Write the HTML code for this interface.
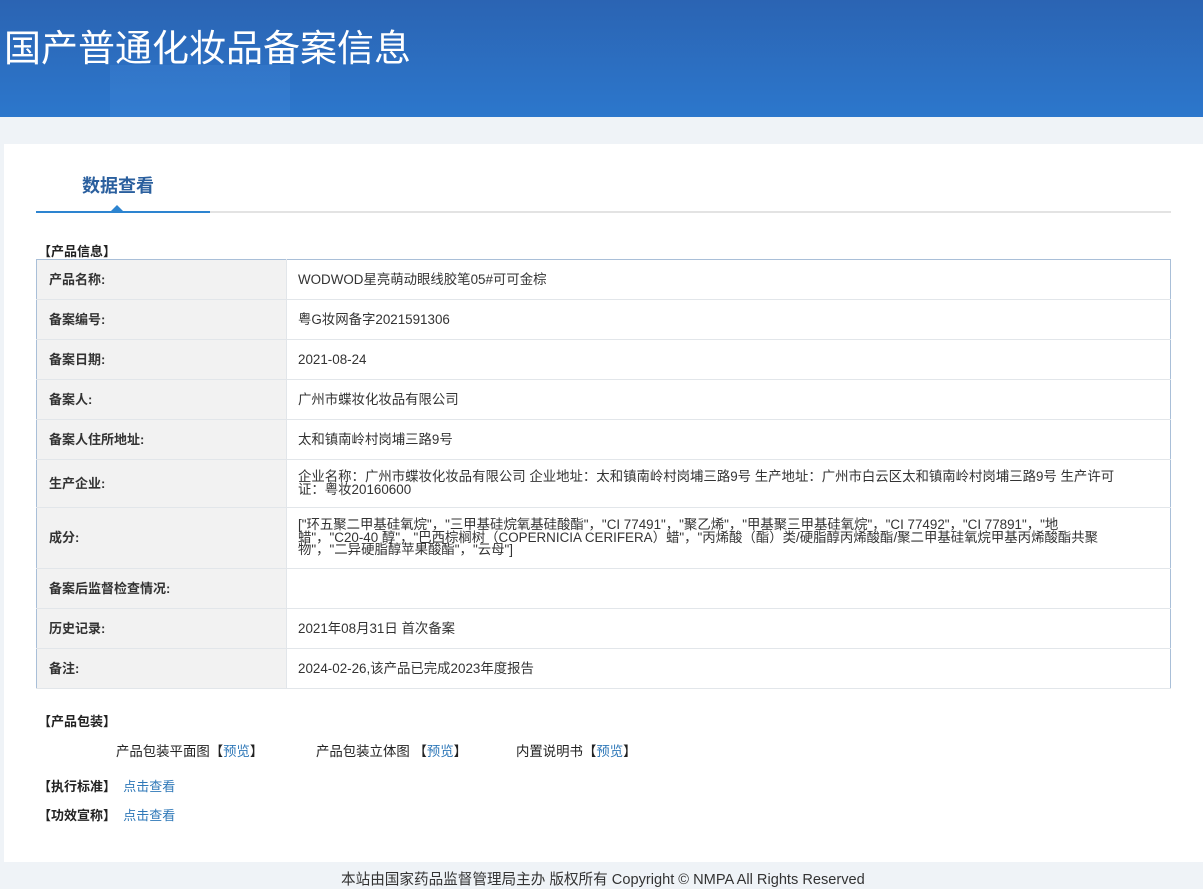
<!DOCTYPE html>
<html><head><meta charset="utf-8"><style>
*{margin:0;padding:0;box-sizing:border-box}
body{width:1203px;height:885px;background:#eff3f7;font-family:"Liberation Sans","Noto Sans CJK SC",sans-serif;color:#333;overflow:hidden;position:relative}
.hd{position:absolute;left:0;top:0;width:1203px;height:117px;background:linear-gradient(180deg,#2b64b3 0%,#2c77cc 100%);overflow:hidden}
.hd .g{position:absolute;left:110px;top:65px;width:180px;height:52px;background:rgba(80,150,230,.2)}
.hd h1{position:absolute;left:4px;top:18px;font-size:37px;font-weight:normal;color:#fff}
.panel{position:absolute;left:4px;top:144px;width:1199px;height:718px;background:#fff}
.tab{position:absolute;left:82px;top:172px;font-size:18px;font-weight:bold;color:#2a5f9e}
.line{position:absolute;left:36px;top:211px;width:1135px;height:2px;background:#e3e3e3}
.line2{position:absolute;left:36px;top:211px;width:174px;height:2px;background:#2d84d0}
.tri{position:absolute;left:111px;top:205px;width:0;height:0;border-left:6px solid transparent;border-right:6px solid transparent;border-bottom:6px solid #2d84d0}
.sec{position:absolute;font-size:13px;font-weight:bold;color:#222}
table{position:absolute;left:36px;top:259px;width:1135px;border-collapse:collapse;border:1px solid #a9bfd8;font-size:13.4px}
td{border-bottom:1px solid #e2e6ea;vertical-align:middle;line-height:16px}
td.l{width:250px;background:#f2f2f2;font-weight:bold;padding-left:12px;color:#333;border-right:1px solid #e2e6ea;font-size:13px}
td.v{padding-left:11px;color:#333}
td.m{line-height:12.5px}
a{color:#2f78b8;text-decoration:none}
.t{position:absolute;font-size:13.4px;color:#222}
.ft{position:absolute;left:341px;top:868px;font-size:14.6px;color:#333}
</style></head><body>
<div class="hd"><div class="g"></div><h1>国产普通化妆品备案信息</h1></div>
<div class="panel"></div>
<div class="tab">数据查看</div>
<div class="line"></div><div class="line2"></div><div class="tri"></div>
<div class="sec" style="left:38px;top:241px">【产品信息】</div>
<table>
<tr style="height:40px"><td class="l">产品名称:</td><td class="v">WODWOD星亮萌动眼线胶笔05#可可金棕</td></tr>
<tr style="height:40px"><td class="l">备案编号:</td><td class="v">粤G妆网备字2021591306</td></tr>
<tr style="height:40px"><td class="l">备案日期:</td><td class="v">2021-08-24</td></tr>
<tr style="height:40px"><td class="l">备案人:</td><td class="v">广州市蝶妆化妆品有限公司</td></tr>
<tr style="height:40px"><td class="l">备案人住所地址:</td><td class="v">太和镇南岭村岗埔三路9号</td></tr>
<tr style="height:48px"><td class="l">生产企业:</td><td class="v m">企业名称：广州市蝶妆化妆品有限公司 企业地址：太和镇南岭村岗埔三路9号 生产地址：广州市白云区太和镇南岭村岗埔三路9号 生产许可<br>证：粤妆20160600</td></tr>
<tr style="height:61px"><td class="l">成分:</td><td class="v m">["环五聚二甲基硅氧烷"，"三甲基硅烷氧基硅酸酯"，"CI 77491"，"聚乙烯"，"甲基聚三甲基硅氧烷"，"CI 77492"，"CI 77891"，"地<br>蜡"，"C20-40 醇"，"巴西棕榈树（COPERNICIA CERIFERA）蜡"，"丙烯酸（酯）类/硬脂醇丙烯酸酯/聚二甲基硅氧烷甲基丙烯酸酯共聚<br>物"，"二异硬脂醇苹果酸酯"，"云母"]</td></tr>
<tr style="height:40px"><td class="l">备案后监督检查情况:</td><td class="v"></td></tr>
<tr style="height:40px"><td class="l">历史记录:</td><td class="v">2021年08月31日 首次备案</td></tr>
<tr style="height:40px"><td class="l">备注:</td><td class="v">2024-02-26,该产品已完成2023年度报告</td></tr>
</table>
<div class="sec" style="left:38px;top:711px">【产品包装】</div>
<div class="t" style="left:116px;top:740px">产品包装平面图【<a>预览</a>】</div>
<div class="t" style="left:316px;top:740px">产品包装立体图 【<a>预览</a>】</div>
<div class="t" style="left:516px;top:740px">内置说明书【<a>预览</a>】</div>
<div class="sec" style="left:38px;top:776px">【执行标准】 &nbsp;<a style="font-weight:normal">点击查看</a></div>
<div class="sec" style="left:38px;top:805px">【功效宣称】 &nbsp;<a style="font-weight:normal">点击查看</a></div>
<div class="ft">本站由国家药品监督管理局主办 版权所有 Copyright © NMPA All Rights Reserved</div>
</body></html>
